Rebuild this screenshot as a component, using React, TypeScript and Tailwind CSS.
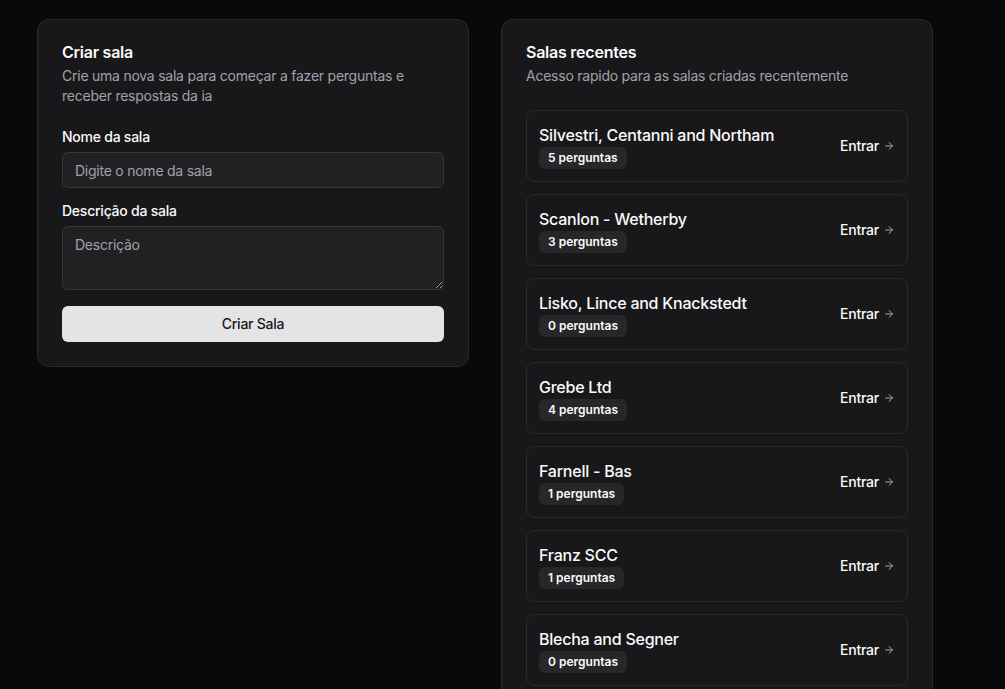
import { ArrowRight } from 'lucide-react';

const rooms = [
  { name: 'Silvestri, Centanni and Northam', questions: 5 },
  { name: 'Scanlon - Wetherby', questions: 3 },
  { name: 'Lisko, Lince and Knackstedt', questions: 0 },
  { name: 'Grebe Ltd', questions: 4 },
  { name: 'Farnell - Bas', questions: 1 },
  { name: 'Franz SCC', questions: 1 },
  { name: 'Blecha and Segner', questions: 0 },
];

function CreateRoomCard() {
  return (
    <div className="flex flex-col gap-6 rounded-xl border border-[#2a2a2e] bg-[#18181b] py-6 text-[#fafafa]">
      <div className="flex flex-col gap-1.5 px-6">
        <h2 className="text-base leading-none font-semibold">Criar sala</h2>
        <p className="text-sm text-[#a1a1aa]">
          Crie uma nova sala para começar a fazer perguntas e receber respostas da ia
        </p>
      </div>
      <form className="flex flex-col gap-4 px-6" onSubmit={(e) => e.preventDefault()}>
        <div className="flex flex-col gap-2">
          <label className="text-sm leading-none font-medium">Nome da sala</label>
          <input
            placeholder="Digite o nome da sala"
            className="h-9 w-full rounded-md border border-[#36363a] bg-[#212124] px-3 text-sm text-[#fafafa] placeholder:text-[#a1a1aa] outline-none"
          />
        </div>
        <div className="flex flex-col gap-2">
          <label className="text-sm leading-none font-medium">Descrição da sala</label>
          <textarea
            placeholder="Descrição"
            className="h-16 w-full rounded-md border border-[#36363a] bg-[#212124] px-3 py-2 text-sm text-[#fafafa] placeholder:text-[#a1a1aa] outline-none"
          />
        </div>
        <button className="h-9 w-full rounded-md bg-[#e4e4e7] text-sm font-medium text-[#18181b]">
          Criar Sala
        </button>
      </form>
    </div>
  );
}

function RecentRoomsCard() {
  return (
    <div className="flex flex-col gap-6 rounded-xl border border-[#2a2a2e] bg-[#18181b] py-6 text-[#fafafa]">
      <div className="flex flex-col gap-1.5 px-6">
        <h2 className="text-base leading-none font-semibold">Salas recentes</h2>
        <p className="text-sm text-[#a1a1aa]">Acesso rapido para as salas criadas recentemente</p>
      </div>
      <div className="flex flex-col gap-3 px-6">
        {rooms.map((room) => (
          <a
            key={room.name}
            href="#"
            className="flex items-center justify-between rounded-lg border border-[#2a2a2e] p-3"
          >
            <div className="flex flex-col items-start">
              <h3 className="text-base font-medium">{room.name}</h3>
              <span className="rounded-md border border-transparent bg-[#27272a] px-2 py-0.5 text-xs font-semibold tracking-normal">
                {room.questions} perguntas
              </span>
            </div>
            <span className="flex items-center gap-1 text-sm font-medium">
              Entrar
              <ArrowRight className="size-3 text-[#a1a1aa]" />
            </span>
          </a>
        ))}
      </div>
    </div>
  );
}

export default function App() {
  return (
    <div className="min-h-screen bg-[#09090b] font-['Inter',sans-serif] tracking-[-0.015em]">
      <div className="ml-[37px] grid w-[896px] grid-cols-2 items-start gap-8 pt-[19px] pb-8">
        <CreateRoomCard />
        <RecentRoomsCard />
      </div>
    </div>
  );
}
